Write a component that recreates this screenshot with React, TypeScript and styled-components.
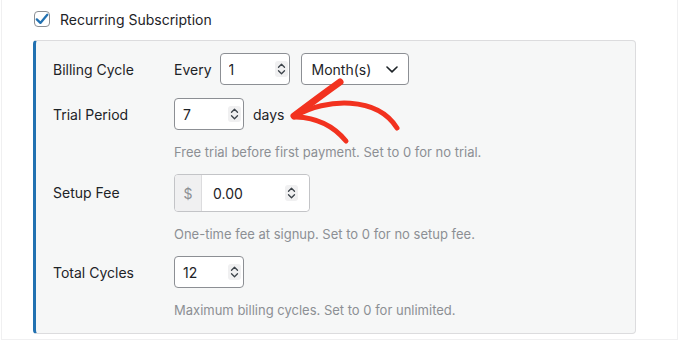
import React from "react";
import styled, { createGlobalStyle } from "styled-components";

const Global = createGlobalStyle`
  html, body { margin: 0; padding: 0; background: #fff; }
  body { font-family: Inter, "Noto Sans", "Liberation Sans", sans-serif; color: #1d2327; -webkit-font-smoothing: antialiased; }
  * { box-sizing: border-box; }
`;

const Frame = styled.div`
  position: relative;
  margin-left: 1px;
  width: 677px;
  height: 340px;
  border: 1px solid #f0f0f1;
  border-top: none;
  padding: 11px 0 0 31px;
`;

const CheckRow = styled.label`
  display: flex;
  align-items: center;
  gap: 10px;
  height: 16px;
  margin-left: 1px;
  font-size: 14px;
  font-weight: 400;
  color: #1d2327;
`;

const CheckBox = styled.span`
  width: 16px;
  height: 16px;
  border: 1px solid #8c8f94;
  border-radius: 4px;
  background: #fff;
  display: flex;
  align-items: center;
  justify-content: center;
`;

const Panel = styled.div`
  margin-top: 13px;
  width: 603px;
  background: #f6f7f7;
  border: 1px solid #dcdcde;
  border-left: 3px solid #2271b1;
  border-radius: 4px;
  padding: 12px 20px 14px 17px;
  display: flex;
  flex-direction: column;
`;

const Row = styled.div<{ $gap?: number }>`
  display: grid;
  grid-template-columns: 121px 1fr;
  margin-top: ${(p) => p.$gap ?? 0}px;
`;

const Label = styled.div<{ $h: number }>`
  height: ${(p) => p.$h}px;
  display: flex;
  align-items: center;
  font-size: 14px;
  font-weight: 400;
  color: #1d2327;
`;

const Controls = styled.div`
  display: flex;
  align-items: center;
`;

const Word = styled.span<{ $mr?: number; $ml?: number }>`
  font-size: 14px;
  font-weight: 400;
  color: #1d2327;
  margin-right: ${(p) => p.$mr ?? 0}px;
  margin-left: ${(p) => p.$ml ?? 0}px;
`;

const Desc = styled.p`
  margin: 13px 0 0;
  font-size: 13px;
  line-height: 18px;
  color: #8c8f94;
`;

const NumWrap = styled.div<{ $w: number; $h: number }>`
  position: relative;
  width: ${(p) => p.$w}px;
  height: ${(p) => p.$h}px;
`;

const NumInput = styled.input<{ $pl: number; $bare?: boolean }>`
  width: 100%;
  height: 100%;
  border: ${(p) => (p.$bare ? "none" : "1px solid #8c8f94")};
  border-radius: ${(p) => (p.$bare ? "0 4px 4px 0" : "4px")};
  background: #fff;
  padding: 0 0 0 ${(p) => p.$pl}px;
  font-family: inherit;
  font-size: 14px;
  color: #1d2327;
  outline: none;
`;

const SpinBox = styled.span<{ $r: number }>`
  position: absolute;
  right: ${(p) => p.$r}px;
  top: 50%;
  transform: translateY(-50%);
  width: 13px;
  height: 16px;
  border-radius: 3px;
  background: #f0f0f1;
  display: flex;
`;

const Select = styled.div`
  margin-left: 11px;
  width: 108px;
  height: 32px;
  border: 1px solid #8c8f94;
  border-radius: 4px;
  background: #fff;
  display: flex;
  align-items: center;
  justify-content: space-between;
  padding: 0 10px 0 10px;
  font-size: 14px;
  color: #1d2327;
`;

const Group = styled.div`
  display: flex;
  width: 136px;
  height: 38px;
  border: 1px solid #c3c4c7;
  border-radius: 4px;
  overflow: hidden;
  background: #fff;
`;

const Addon = styled.span`
  width: 27px;
  flex: none;
  background: #f0f0f1;
  border-right: 1px solid #dcdcde;
  display: flex;
  align-items: center;
  justify-content: center;
  font-size: 14px;
  color: #8c8f94;
`;

const Arrow = styled.svg`
  position: absolute;
  left: 0;
  top: 0;
  pointer-events: none;
`;

const Spinner = ({ right }: { right: number }) => (
  <SpinBox $r={right}>
    <svg width="13" height="16" viewBox="0 0 13 16">
      <path d="M3.5 6.3 L6.5 3.3 L9.5 6.3" fill="none" stroke="#3c434a" strokeWidth="1.3" strokeLinecap="round" strokeLinejoin="round" />
      <path d="M3.5 9.7 L6.5 12.7 L9.5 9.7" fill="none" stroke="#3c434a" strokeWidth="1.3" strokeLinecap="round" strokeLinejoin="round" />
    </svg>
  </SpinBox>
);

const NumberField = ({ value, w = 70, h = 32, right = 3 }: { value: string; w?: number; h?: number; right?: number }) => (
  <NumWrap $w={w} $h={h}>
    <NumInput type="text" defaultValue={value} $pl={8} />
    <Spinner right={right} />
  </NumWrap>
);

export default function App() {
  return (
    <>
      <Global />
      <Frame>
        <CheckRow>
          <CheckBox>
            <svg width="14" height="14" viewBox="0 0 14 14">
              <path d="M1.8 7.4 L5.4 10.9 L12.3 2.8" fill="none" stroke="#2271b1" strokeWidth="2.3" strokeLinecap="round" strokeLinejoin="round" />
            </svg>
          </CheckBox>
          Recurring Subscription
        </CheckRow>
        <Panel>
          <Row>
            <Label $h={32}>Billing Cycle</Label>
            <div>
              <Controls>
                <Word $mr={8}>Every</Word>
                <NumberField value="1" right={2} />
                <Select>
                  <span>Month(s)</span>
                  <svg width="12" height="7" viewBox="0 0 12 7">
                    <path d="M1 1 L6 5.8 L11 1" fill="none" stroke="#1d2327" strokeWidth="1.6" strokeLinecap="round" strokeLinejoin="round" />
                  </svg>
                </Select>
              </Controls>
            </div>
          </Row>
          <Row $gap={13}>
            <Label $h={32}>Trial Period</Label>
            <div>
              <Controls>
                <NumberField value="7" />
                <Word $ml={9}>days</Word>
              </Controls>
              <Desc>Free trial before first payment. Set to 0 for no trial.</Desc>
            </div>
          </Row>
          <Row $gap={13}>
            <Label $h={36}>Setup Fee</Label>
            <div>
              <Group>
                <Addon>$</Addon>
                <NumWrap $w={107} $h={36}>
                  <NumInput type="text" defaultValue="0.00" $pl={11} $bare />
                  <Spinner right={11} />
                </NumWrap>
              </Group>
              <Desc>One-time fee at signup. Set to 0 for no setup fee.</Desc>
            </div>
          </Row>
          <Row $gap={13}>
            <Label $h={32}>Total Cycles</Label>
            <div>
              <NumberField value="12" />
              <Desc>Maximum billing cycles. Set to 0 for unlimited.</Desc>
            </div>
          </Row>
        </Panel>
        <Arrow width="677" height="340" viewBox="1 0 677 340">
          <g fill="none" stroke="#f2321f" strokeLinecap="round" strokeLinejoin="round">
            <path d="M339 82 Q 318 97 293 116" strokeWidth="7" />
            <path d="M294 116 C 325 98, 376 96, 396 128" strokeWidth="5" />
            <path d="M295 117 Q 326 118 345 141" strokeWidth="5" />
          </g>
        </Arrow>
      </Frame>
    </>
  );
}
